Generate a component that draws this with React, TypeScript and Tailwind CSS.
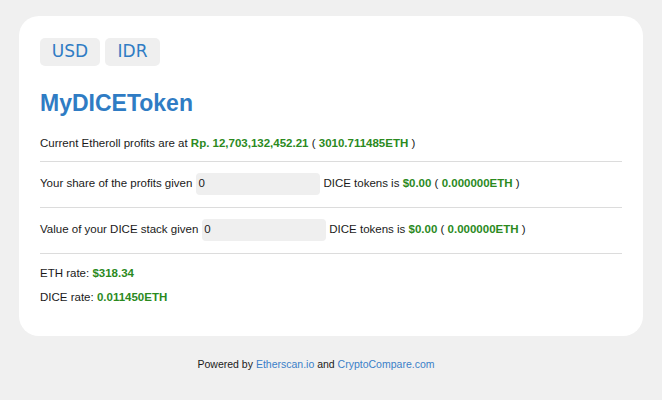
const green = "text-[#2b8a1e] font-bold";

function Row({ label, pad }: { label: string; pad: string }) {
  return (
    <div className="flex items-center pt-[11px] pb-3 border-b border-[#dcdcdc]">
      <span>{label}</span>
      <div className={`ml-1 h-[22px] ${pad} bg-[#efefef] rounded-[4px] flex items-center pl-[2px]`}>0</div>
      <span className="ml-[3px]">
        DICE tokens is <span className={green}>$0.00</span> ( <span className={green}>0.000000ETH</span> )
      </span>
    </div>
  );
}

export default function App() {
  return (
    <div className="min-h-[400px] bg-[#f0f0f0] pt-4 px-[19px] font-['Liberation_Sans',Arial,sans-serif] text-[11.5px] text-[#1a1a1a]">
      <div className="bg-white rounded-[20px] px-[21px] pt-[22px] pb-[28px]">
        <div className="flex gap-[5px]">
          <button className="h-7 w-[60px] bg-[#efefef] rounded-[5px] font-['DejaVu_Sans',sans-serif] text-[17px] text-[#2f7cc4]">USD</button>
          <button className="h-7 w-[55px] bg-[#efefef] rounded-[5px] font-['DejaVu_Sans',sans-serif] text-[17px] text-[#2f7cc4]">IDR</button>
        </div>
        <h1 className="mt-[23px] text-[23px] leading-[28px] font-bold text-[#2f7cc4]">MyDICEToken</h1>
        <div className="mt-[15px] leading-[22px] pb-[7px] border-b border-[#dcdcdc]">
          Current Etheroll profits are at <span className={green}>Rp. 12,703,132,452.21</span> ({" "}
          <span className={green}>3010.711485ETH</span> )
        </div>
        <Row label="Your share of the profits given" pad="w-[124px]" />
        <Row label="Value of your DICE stack given" pad="w-[124px]" />
        <div className="mt-2 leading-[22px]">
          ETH rate: <span className={green}>$318.34</span>
        </div>
        <div className="mt-[2px] leading-[22px]">
          DICE rate: <span className={green}>0.011450ETH</span>
        </div>
      </div>
      <div className="text-center text-[10.5px] mt-[20px] pr-[30px] leading-[16px]">
        Powered by <a className="text-[#3a7fc8]">Etherscan.io</a> and{" "}
        <a className="text-[#3a7fc8]">CryptoCompare.com</a>
      </div>
    </div>
  );
}
